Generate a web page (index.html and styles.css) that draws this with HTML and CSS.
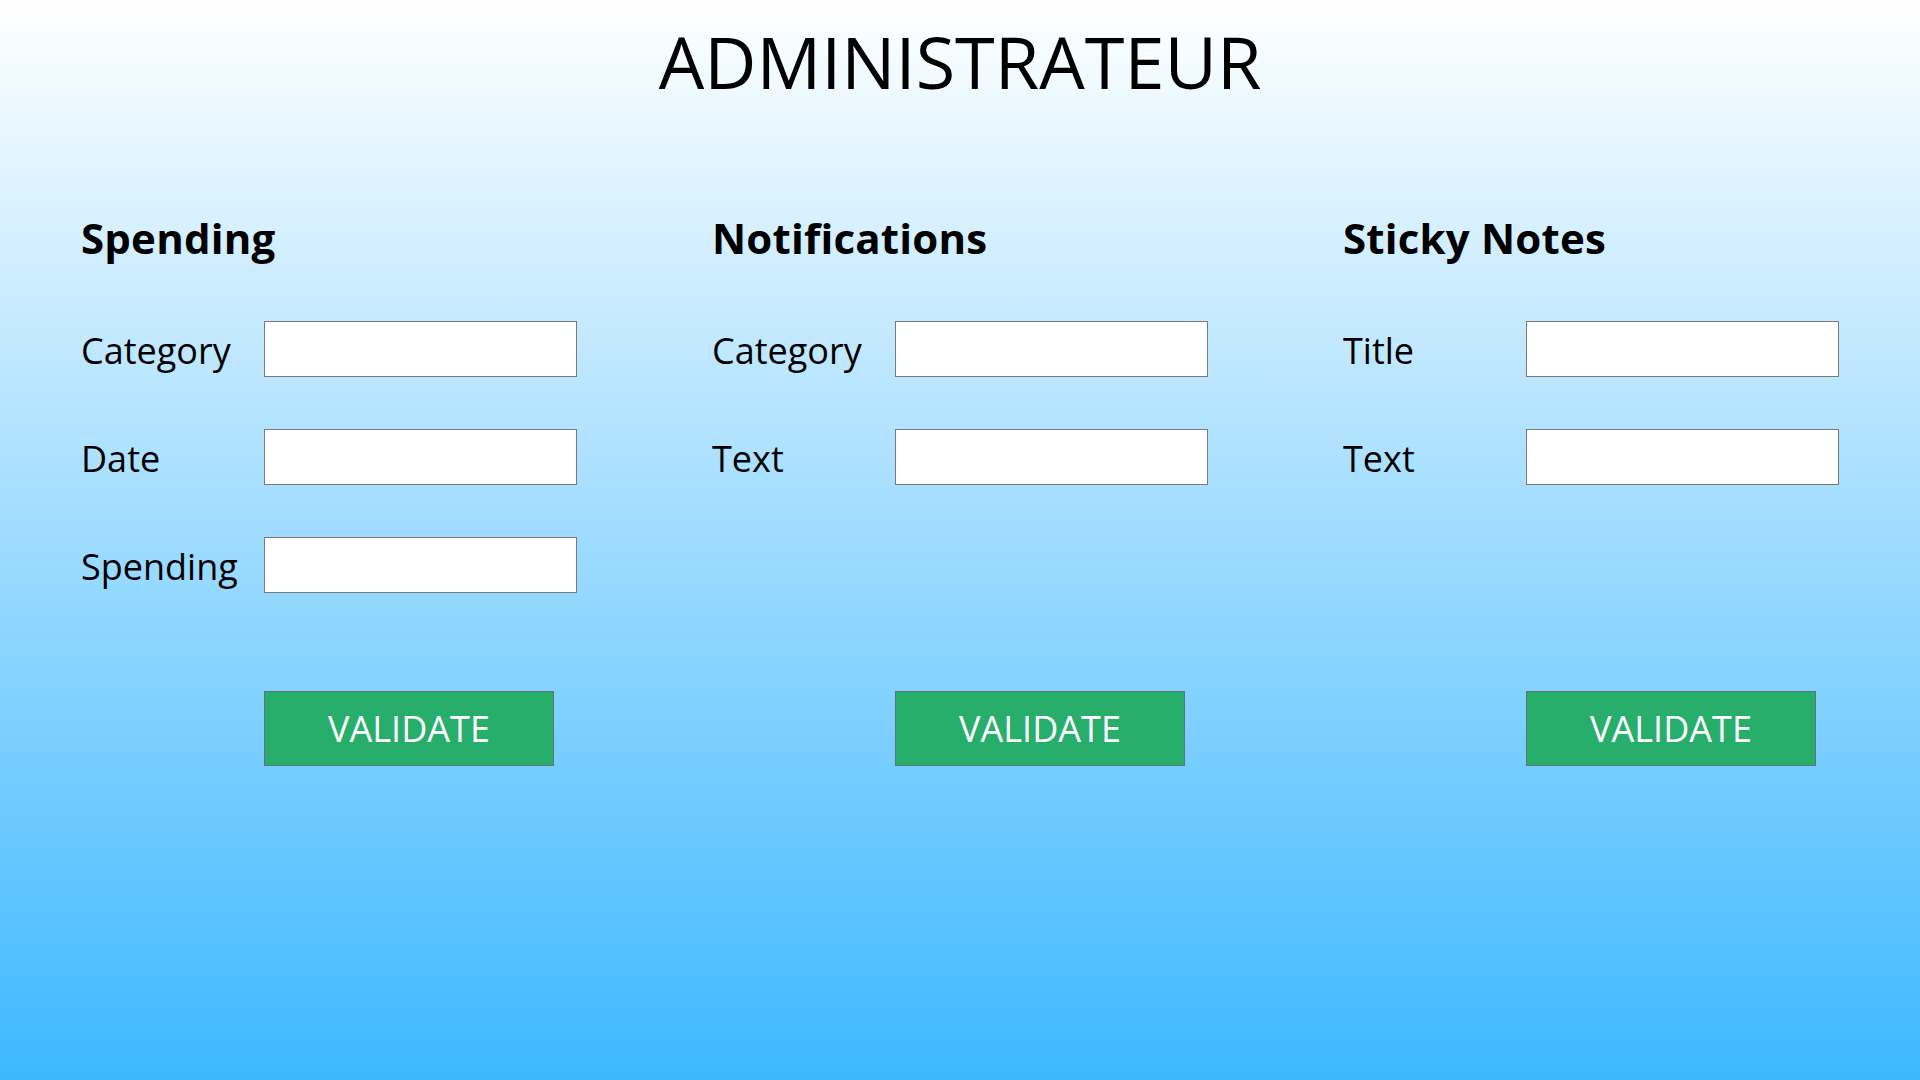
FILE: index.html
```html
<!DOCTYPE html>
<html lang="en">
<head>
<meta charset="utf-8">
<title>Administrateur</title>
<link rel="stylesheet" href="styles.css">
</head>
<body>
<div class="page">
  <h1 class="title">ADMINISTRATEUR</h1>
  <main class="columns">
    <section class="panel">
      <h2 class="panel-title">Spending</h2>
      <div class="rows">
        <label class="row"><span class="label">Category</span><input class="field" type="text"></label>
        <label class="row"><span class="label">Date</span><input class="field" type="text"></label>
        <label class="row"><span class="label">Spending</span><input class="field" type="text"></label>
      </div>
      <button class="validate" type="button">VALIDATE</button>
    </section>
    <section class="panel">
      <h2 class="panel-title">Notifications</h2>
      <div class="rows">
        <label class="row"><span class="label">Category</span><input class="field" type="text"></label>
        <label class="row"><span class="label">Text</span><input class="field" type="text"></label>
        <div class="row row-empty"></div>
      </div>
      <button class="validate" type="button">VALIDATE</button>
    </section>
    <section class="panel">
      <h2 class="panel-title">Sticky Notes</h2>
      <div class="rows">
        <label class="row"><span class="label">Title</span><input class="field" type="text"></label>
        <label class="row"><span class="label">Text</span><input class="field" type="text"></label>
        <div class="row row-empty"></div>
      </div>
      <button class="validate" type="button">VALIDATE</button>
    </section>
  </main>
</div>
</body>
</html>
```
FILE: styles.css
```css
* { box-sizing: border-box; }
html, body { margin: 0; padding: 0; }
body {
  width: 1920px;
  height: 1080px;
  overflow: hidden;
  background: linear-gradient(to bottom, #ffffff 0%, #3db8ff 100%);
  font-family: "Open Sans", "DejaVu Sans", sans-serif;
  color: #000;
}
.page {
  display: flex;
  flex-direction: column;
}
.title {
  margin: 0;
  padding-top: 12px;
  height: 110px;
  line-height: 98px;
  font-size: 72px;
  font-weight: 400;
  text-align: center;
}
.columns {
  display: flex;
  column-gap: 135px;
  padding-left: 81px;
  margin-top: 99px;
}
.panel {
  width: 496px;
  display: flex;
  flex-direction: column;
}
.panel-title {
  margin: 0;
  font-size: 42px;
  font-weight: 700;
  line-height: 58px;
  height: 58px;
  letter-spacing: 0.2px;
}
.rows {
  margin-top: 54px;
  display: flex;
  flex-direction: column;
  row-gap: 52px;
}
.row {
  display: flex;
  align-items: center;
  height: 56px;
}
.label {
  width: 183px;
  font-size: 36px;
  line-height: 56px;
  padding-top: 3px;
}
.field {
  width: 313px;
  height: 56px;
  margin: 0;
  border: 1px solid #7a7a7a;
  background: #fff;
  padding: 0 8px;
  font: inherit;
  font-size: 24px;
  outline: none;
}
.validate {
  margin-top: 98px;
  margin-left: 183px;
  width: 290px;
  height: 75px;
  background: #27ae6a;
  border: 1px solid #66707a;
  color: #fff;
  font-family: "Open Sans", "DejaVu Sans", sans-serif;
  font-size: 36px;
  font-weight: 400;
  padding: 0;
  cursor: pointer;
}
```
